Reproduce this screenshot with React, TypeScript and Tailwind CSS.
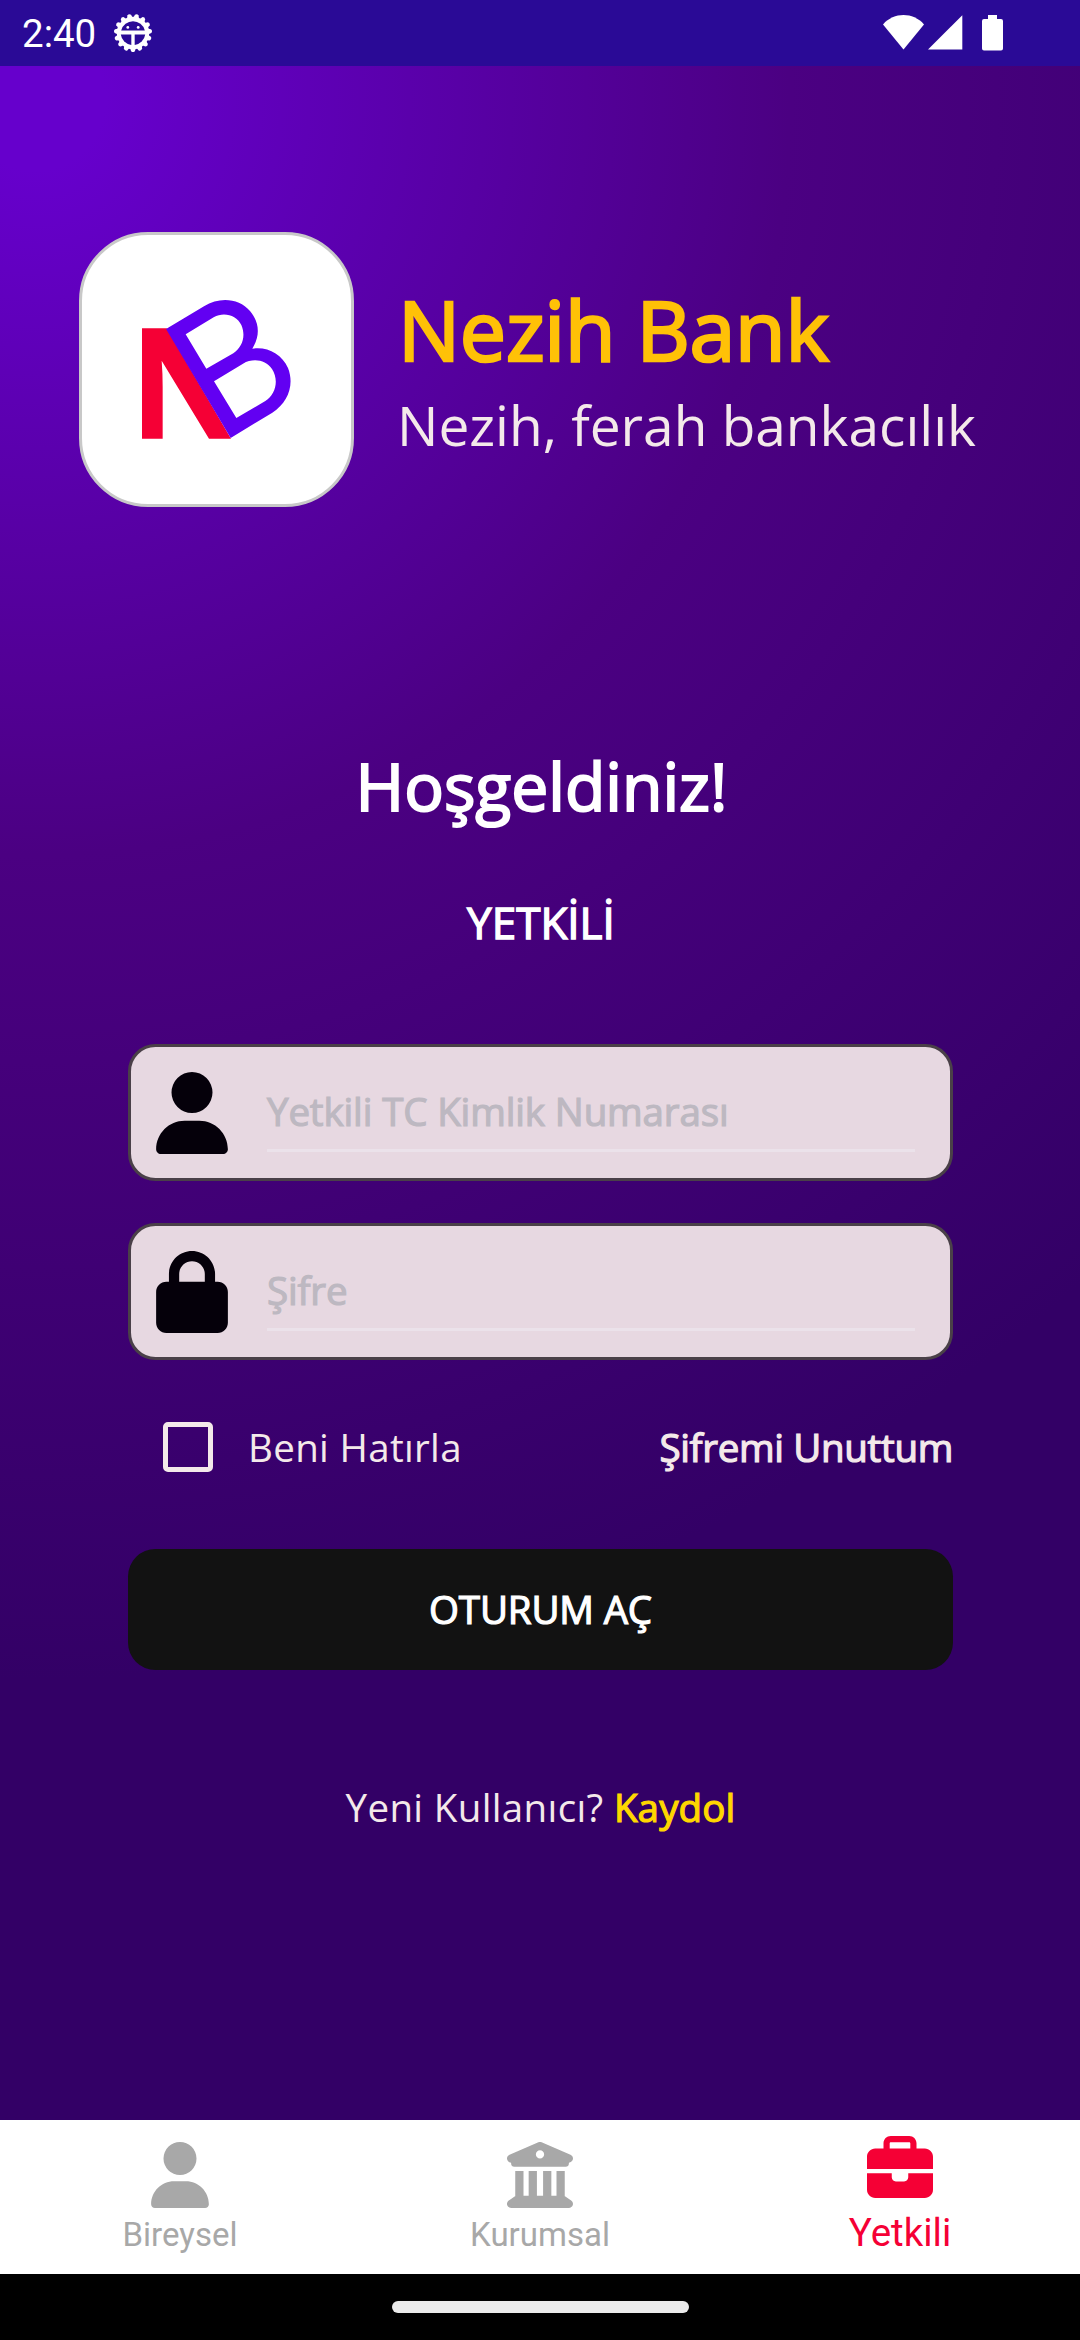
import type { ReactNode } from "react";
import { FaBriefcase, FaBuildingColumns, FaLock, FaUser } from "react-icons/fa6";

function DebugIcon() {
  const teeth = Array.from({ length: 15 }, (_, i) => i * 24 + 12);
  return (
    <svg width="40" height="40" viewBox="-20 -20 40 40" className="ml-[17px] mt-[-1px]">
      {teeth.map((a) => (
        <path key={a} d="M-3.2 -14 L-1.9 -18.2 Q0 -20 1.9 -18.2 L3.2 -14 Z" fill="#fff" transform={`rotate(${a})`} />
      ))}
      <circle r="16.2" fill="#fff" />
      <g fill="#2a0a96">
        <path d="M-11.8 -2.6 A12.2 12.2 0 0 1 11.8 -2.6 Z" />
        <path d="M-12.2 1.6 H-1.7 V12 A12.3 12.3 0 0 1 -12.2 1.6 Z" />
        <path d="M12.2 1.6 H1.7 V12 A12.3 12.3 0 0 0 12.2 1.6 Z" />
      </g>
      <circle cx="-5.2" cy="-5.6" r="1.4" fill="#fff" />
      <circle cx="5.2" cy="-5.6" r="1.4" fill="#fff" />
    </svg>
  );
}

function StatusBar() {
  return (
    <header className="flex h-[66px] items-center bg-[#2a0a96] pl-[22px] pr-[77px] text-white">
      <span className="pt-[1px] font-['Roboto'] text-[38.5px] leading-[66px]">2:40</span>
      <DebugIcon />
      <div className="ml-auto flex h-[66px] items-start pt-[15px]">
        <svg width="41" height="35" viewBox="0 0 41 35" fill="#fff">
          <path d="M0 9.4 C11 -3 30 -3 41 9.4 L20.5 34.4 Z" />
        </svg>
        <svg width="35" height="35" viewBox="0 0 35 35" fill="#fff" className="ml-[3.5px]">
          <path d="M0 34.6 L34.3 0.3 V34.6 Z" />
        </svg>
        <svg width="21" height="36" viewBox="0 0 21 36" fill="#fff" className="ml-[19.5px]">
          <path d="M6 0 H15 V4 H19 Q21 4 21 6 V33.5 Q21 35.5 19 35.5 H2 Q0 35.5 0 33.5 V6 Q0 4 2 4 H6 Z" />
        </svg>
      </div>
    </header>
  );
}

function Logo() {
  return (
    <div className="size-[275px] shrink-0 overflow-hidden rounded-[69px] border-[3px] border-[#c8c8c8] bg-white">
      <svg viewBox="66 75 807 807" className="size-full">
        <path fill="#f50035" d="M246 355 H320 L513 686 H447 L305 452 Q308 490 308 530 V686 H246 Z" />
        <path
          fill="#6200f2"
          fillRule="evenodd"
          d="M318 357 L432 289 C480 259 538 266 570 303 C600 340 600 378 577 416 C622 409 665 432 684 474 C704 525 684 578 637 608 L512 684 Z M377 373 L461 322 C493 304 530 317 544 345 C558 378 548 411 520 430 L439 476 Z M462 514 L549 461 C580 443 618 450 636 477 C657 510 648 553 616 573 L529 624 Z"
        />
      </svg>
    </div>
  );
}

function Field({ icon, label }: { icon: ReactNode; label: string }) {
  return (
    <div className="flex h-[137px] w-[825px] rounded-[27.5px] border-[3px] border-[#4a4048] bg-[#e7d8e1] pl-[25px] pr-[35px] text-[#05000a]">
      <div className="mt-[25px] w-[72px]">{icon}</div>
      <div className="ml-[39px] mt-[34px] h-[71px] flex-1 border-b-[3px] border-[#ebe2ea] text-[38.5px] leading-[60px] tracking-[-0.14px] text-[#bdb8c1] [-webkit-text-stroke:1.2px_#bdb8c1]">
        {label}
      </div>
    </div>
  );
}

function Tab({ icon, label, active }: { icon: ReactNode; label: string; active?: boolean }) {
  return (
    <div className={active ? "flex flex-1 flex-col items-center pt-[16px] text-[#f50035]" : "flex flex-1 flex-col items-center pt-[22px] text-[#a8a8a8]"}>
      {icon}
      <span className={active ? "mt-[6px] text-[38.5px] leading-[50px]" : "mt-[2px] text-[33px] leading-[50px]"}>{label}</span>
    </div>
  );
}

export default function App() {
  return (
    <div className="flex h-[2340px] w-[1080px] flex-col overflow-hidden font-['Open_Sans',sans-serif]">
      <StatusBar />
      <main className="flex h-[2054px] flex-col items-center bg-[radial-gradient(circle_1580px_at_35px_34px,#6600cc_0px,#6600cc_70px,#4b0082_755px,#330066_1580px)] pl-px">
        <section className="mt-[166px] flex w-full pl-[78px]">
          <Logo />
          <div className="ml-[44px] mt-[47px] flex flex-col whitespace-nowrap">
            <h1 className="text-[82.5px] leading-[100px] tracking-[-0.25px] text-[#ffc107] [-webkit-text-stroke:2.6px_#ffc107]">Nezih Bank</h1>
            <p className="-ml-px mt-[11px] text-[55px] leading-[70px] text-[#f4e9ea]">Nezih, ferah bankacılık</p>
          </div>
        </section>
        <h2 className="mt-[233px] pl-[2px] text-[66px] leading-[90px] text-white [-webkit-text-stroke:2px_#fff]">Hoşgeldiniz!</h2>
        <p className="mt-[62px] pl-px text-[44px] leading-[60px] text-white [-webkit-text-stroke:1.4px_#fff]">YETKİLİ</p>
        <div className="mt-[92px] flex flex-col gap-[42px]">
          <Field icon={<FaUser className="h-[82px] w-[72px]" />} label="Yetkili TC Kimlik Numarası" />
          <Field icon={<FaLock className="h-[82px] w-[72px]" />} label="Şifre" />
        </div>
        <div className="mt-[57px] flex h-[60px] w-[825px] items-center text-[38.5px] leading-[60px] text-[#f4e9ea]">
          <span className="ml-[35px] size-[50px] rounded-[5px] border-[5px] border-[#f4e9ea]" />
          <span className="ml-[35px] tracking-[0.33px]">Beni Hatırla</span>
          <span className="ml-auto tracking-[-0.33px] [-webkit-text-stroke:1.2px_#f4e9ea]">Şifremi Unuttum</span>
        </div>
        <button className="mt-[72px] h-[121px] w-[825px] rounded-[27.5px] bg-[#121212] pb-[2px] text-[38.5px] leading-[60px] tracking-[-0.15px] text-white [-webkit-text-stroke:1.2px_#fff]">
          OTURUM AÇ
        </button>
        <p className="mt-[107px] text-[38.5px] leading-[60px] tracking-[0.36px] text-[#f4e9ea]">
          Yeni Kullanıcı? <span className="tracking-[0.15px] text-[#ffd700] [-webkit-text-stroke:1.2px_#ffd700]">Kaydol</span>
        </p>
      </main>
      <nav className="flex h-[154px] bg-white font-['Roboto']">
        <Tab icon={<FaUser className="size-[66px]" />} label="Bireysel" />
        <Tab icon={<FaBuildingColumns className="size-[66px]" />} label="Kurumsal" />
        <Tab icon={<FaBriefcase className="size-[66px]" />} label="Yetkili" active />
      </nav>
      <footer className="flex h-[66px] items-center justify-center bg-black">
        <div className="h-[12px] w-[297px] rounded-full bg-[#ebebeb]" />
      </footer>
    </div>
  );
}
